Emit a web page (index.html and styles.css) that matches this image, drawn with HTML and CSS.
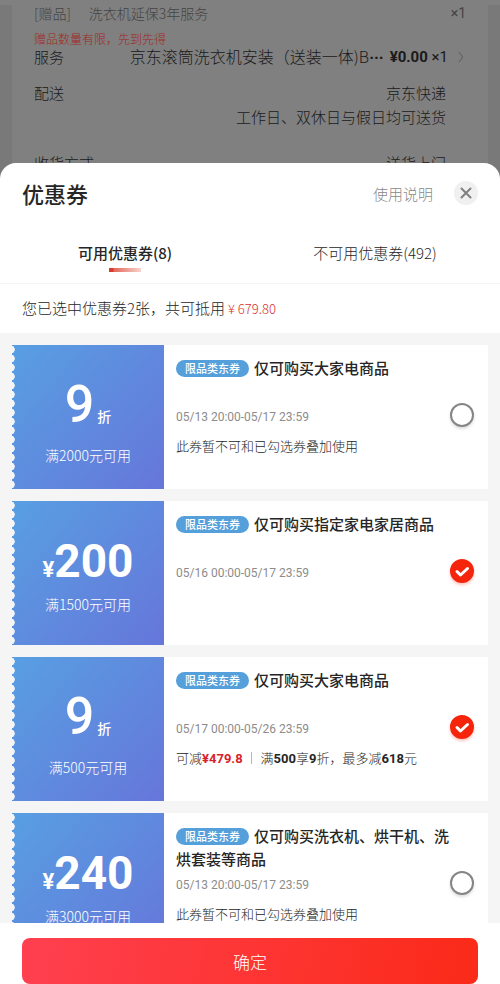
FILE: index.html
```html
<!DOCTYPE html>
<html lang="zh-CN">
<head>
<meta charset="utf-8">
<meta name="viewport" content="width=device-width, initial-scale=1">
<title>优惠券</title>
<link rel="stylesheet" href="styles.css">
</head>
<body>
<div class="app">
  <section class="order">
    <div class="order-card">
      <div class="row gift"><span class="gift-tag">[赠品]</span><span class="gift-name">洗衣机延保3年服务</span><span class="gift-count">×1</span></div>
      <p class="gift-hint">赠品数量有限，先到先得</p>
      <div class="row service">
        <span>服务</span>
        <span class="service-name">京东滚筒洗衣机安装（送装一体)B<span class="dots">···</span></span>
        <span class="service-price"><b>¥0.00</b> ×1</span>
        <svg class="chevron" viewBox="0 0 6 12"><path d="M1 1Q3 3 4.500 6Q3 9 1 11"/></svg>
      </div>
      <div class="row delivery"><span>配送</span><span class="value">京东快递<br>工作日、双休日与假日均可送货</span></div>
      <div class="row method"><span>收货方式</span><span class="value">送货上门</span></div>
    </div>
  </section>

  <main class="sheet">
    <header class="head">
      <h1>优惠券</h1>
      <a class="help" href="#help">使用说明</a>
      <button class="close" type="button" aria-label="关闭"><svg viewBox="0 0 24 24"><path d="M7.500 7.500l9 9M16.500 7.500l-9 9"/></svg></button>
    </header>
    <nav class="tabs">
      <button class="tab active" type="button">可用优惠券(8)</button>
      <button class="tab" type="button">不可用优惠券(492)</button>
    </nav>
    <p class="summary">您已选中优惠券2张，共可抵用<span class="total">¥ 679.80</span></p>

    <div class="list">
      <article class="coupon">
        <div class="face"><div class="amount discount"><span class="num">9</span><span class="unit">折</span></div><p class="rule">满2000元可用</p></div>
        <div class="info">
          <label class="title" for="c1"><span class="tag">限品类东券</span>仅可购买大家电商品</label>
          <p class="date">05/13 20:00-05/17 23:59</p>
          <p class="note">此券暂不可和已勾选券叠加使用</p>
        </div>
        <span class="pick"><input type="checkbox" id="c1"><svg viewBox="0 0 24 24"><path d="M7 12.500l3.500 3.500L17.500 9.500"/></svg></span>
      </article>
      <article class="coupon">
        <div class="face"><div class="amount"><span class="yen">¥</span><span class="num">200</span></div><p class="rule">满1500元可用</p></div>
        <div class="info">
          <label class="title" for="c2"><span class="tag">限品类东券</span>仅可购买指定家电家居商品</label>
          <p class="date">05/16 00:00-05/17 23:59</p>
        </div>
        <span class="pick"><input type="checkbox" id="c2" checked><svg viewBox="0 0 24 24"><path d="M7 12.500l3.500 3.500L17.500 9.500"/></svg></span>
      </article>
      <article class="coupon">
        <div class="face"><div class="amount discount"><span class="num">9</span><span class="unit">折</span></div><p class="rule">满500元可用</p></div>
        <div class="info">
          <label class="title" for="c3"><span class="tag">限品类东券</span>仅可购买大家电商品</label>
          <p class="date">05/17 00:00-05/26 23:59</p>
          <p class="note">可减<b class="save">¥479.8</b><span class="bar"></span>满<b>500</b>享<b>9</b>折，最多减<b>618</b>元</p>
        </div>
        <span class="pick"><input type="checkbox" id="c3" checked><svg viewBox="0 0 24 24"><path d="M7 12.500l3.500 3.500L17.500 9.500"/></svg></span>
      </article>
      <article class="coupon">
        <div class="face"><div class="amount"><span class="yen">¥</span><span class="num">240</span></div><p class="rule">满3000元可用</p></div>
        <div class="info">
          <label class="title" for="c4"><span class="tag">限品类东券</span>仅可购买洗衣机、烘干机、洗烘套装等商品</label>
          <p class="date">05/13 20:00-05/17 23:59</p>
          <p class="note">此券暂不可和已勾选券叠加使用</p>
        </div>
        <span class="pick"><input type="checkbox" id="c4"><svg viewBox="0 0 24 24"><path d="M7 12.500l3.500 3.500L17.500 9.500"/></svg></span>
      </article>
    </div>

    <footer class="foot"><button class="confirm" type="button">确定</button></footer>
  </main>
</div>
</body>
</html>
```
FILE: styles.css
```css
* { box-sizing: border-box; }
body, h1, p { margin: 0; }
body { font-family: "Noto Sans CJK SC", sans-serif; font-weight: 300; font-size: 15px; color: #262626; background: #797979; }
button { border: 0; padding: 0; background: none; font: inherit; color: inherit; cursor: pointer; }
svg { fill: none; stroke-linecap: round; stroke-linejoin: round; }
.app { display: flex; flex-direction: column; height: 100vh; }

/* Dimmed order page behind the sheet */
.order { flex: none; height: 178px; overflow: hidden; padding: 0 12px; background: linear-gradient(#808080 5px, #797979 5px); color: #1a1a1a; }
.order-card { padding: 3px 22px 0; background: #808080; }
.row { display: flex; }
.gift { line-height: 20px; font-size: 14px; color: #444; }
.gift-name { margin-left: 18px; }
.gift-count { margin-left: auto; font-family: Roboto, sans-serif; font-weight: 400; }
.gift-hint { margin-top: 8px; font-size: 12px; line-height: 16px; color: #a02a22; }
.service { height: 20px; line-height: 20px; align-items: center; }
.service-name { flex: 1; font-size: 16px; text-align: right; white-space: nowrap; }
.dots { font-family: Roboto, sans-serif; font-weight: 700; }
.service-price { margin: 0 10px 0 6px; font-family: Roboto, sans-serif; font-weight: 400; font-size: 15px; }
.service-price b { font-weight: 700; }
.chevron { width: 6px; height: 12px; margin-right: 2px; stroke: #5c5c5c; stroke-width: 1; }
.delivery { margin-top: 14px; line-height: 24px; }
.value { margin: 0 20px 0 auto; text-align: right; }
.method { margin-top: 22px; line-height: 24px; }

/* Bottom sheet */
.sheet { flex: 1; min-height: 0; display: flex; flex-direction: column; position: relative; margin-top: -15px; background: #fff; border-radius: 16px 16px 0 0; overflow: hidden; }
.head { flex: none; display: flex; align-items: center; height: 60px; padding: 0 22px; }
h1 { flex: 1; font-size: 22px; font-weight: 500; }
.help { color: #888; text-decoration: none; }
.close { width: 24px; height: 24px; margin-left: 21px; border-radius: 50%; background: #f0f0f0; }
.close svg { display: block; stroke: #808080; stroke-width: 2; }
.tabs { flex: none; display: grid; grid-template-columns: 1fr 1fr; height: 61px; border-bottom: 1px solid #f5f5f5; }
.tab { position: relative; line-height: 60px; }
.tab.active { font-weight: 500; }
.tab.active::after { content: ""; position: absolute; left: 50%; bottom: 11px; width: 32px; height: 4px; margin-left: -16px; background: linear-gradient(90deg, #d93a2b 4px, #e4695c 5px, #f8d4cf); }
.summary { flex: none; padding: 0 22px; line-height: 48px; }
.total { margin-left: 3px; font-size: 13px; color: #d8302c; }

.list { flex: 1; min-height: 0; display: flex; flex-direction: column; gap: 12px; padding: 12px; background: #f5f5f5; overflow-y: auto; scrollbar-width: none; }
.coupon { flex: none; display: flex; min-height: 144px; background: #fff; }
.face { position: relative; flex: none; width: 152px; padding-top: 32px; color: #fff; text-align: center; background: linear-gradient(130deg, #589fe2, #6676da); }
.face::before { content: ""; position: absolute; left: 0; top: 0; bottom: 0; width: 3px; background: radial-gradient(ellipse 3px 4px at 0 50%, #f5f5f5 80%, transparent) 0 0 / 3px 9px; }
.amount { display: flex; justify-content: center; align-items: baseline; height: 60px; line-height: 56px; font-family: Roboto, sans-serif; font-weight: 700; }
.num { font-size: 46px; }
.yen { font-size: 22px; }
.discount { height: 67px; }
.discount .num { font-size: 52px; font-weight: 500; }
.unit { margin-left: 3px; font-family: "Noto Sans CJK SC", sans-serif; font-size: 14px; font-weight: 500; }
.rule { font-size: 14px; line-height: 22px; }
.info { flex: 1; min-width: 0; padding: 11px 0 12px 12px; }
.title { display: block; min-height: 46px; line-height: 23px; font-weight: 500; }
.tag { display: inline-block; margin-right: 5px; padding: 0 9px; border-radius: 9px; background: #559fdb; color: #fff; font-size: 11px; line-height: 17px; vertical-align: 1px; }
.date { margin-top: 7px; font: 400 12px/16px Roboto, sans-serif; color: #8c8c8c; }
.note { margin-top: 12px; font-size: 13px; line-height: 18px; }
.note b { font-family: Roboto, sans-serif; font-weight: 700; }
.note .save { color: #d9232a; }
.bar { display: inline-block; width: 1px; height: 12px; margin: 0 9px 0 8px; background: #dfa5a5; vertical-align: -1px; }
.pick { align-self: center; display: grid; width: 24px; height: 24px; margin: 0 14px 4px 0; }
.pick input, .pick svg { grid-area: 1 / 1; width: 24px; height: 24px; margin: 0; }
.pick input { appearance: none; border: 2px solid #858585; border-radius: 50%; background: #fff; box-shadow: 0 2px 3px #0002; }
.pick input:checked { border-color: #f5250c; background: #f5250c; box-shadow: 0 2px 3px #f5250c44; }
.pick svg { visibility: hidden; pointer-events: none; stroke: #fff; stroke-width: 3; }
.pick input:checked + svg { visibility: visible; }

.foot { flex: none; padding: 15px 22px 0; background: #fff; }
.confirm { display: block; width: 100%; height: 46px; border-radius: 8px; color: #fff; font-size: 17px; background: linear-gradient(100deg, #ff4050, #fb2a18); }
```
